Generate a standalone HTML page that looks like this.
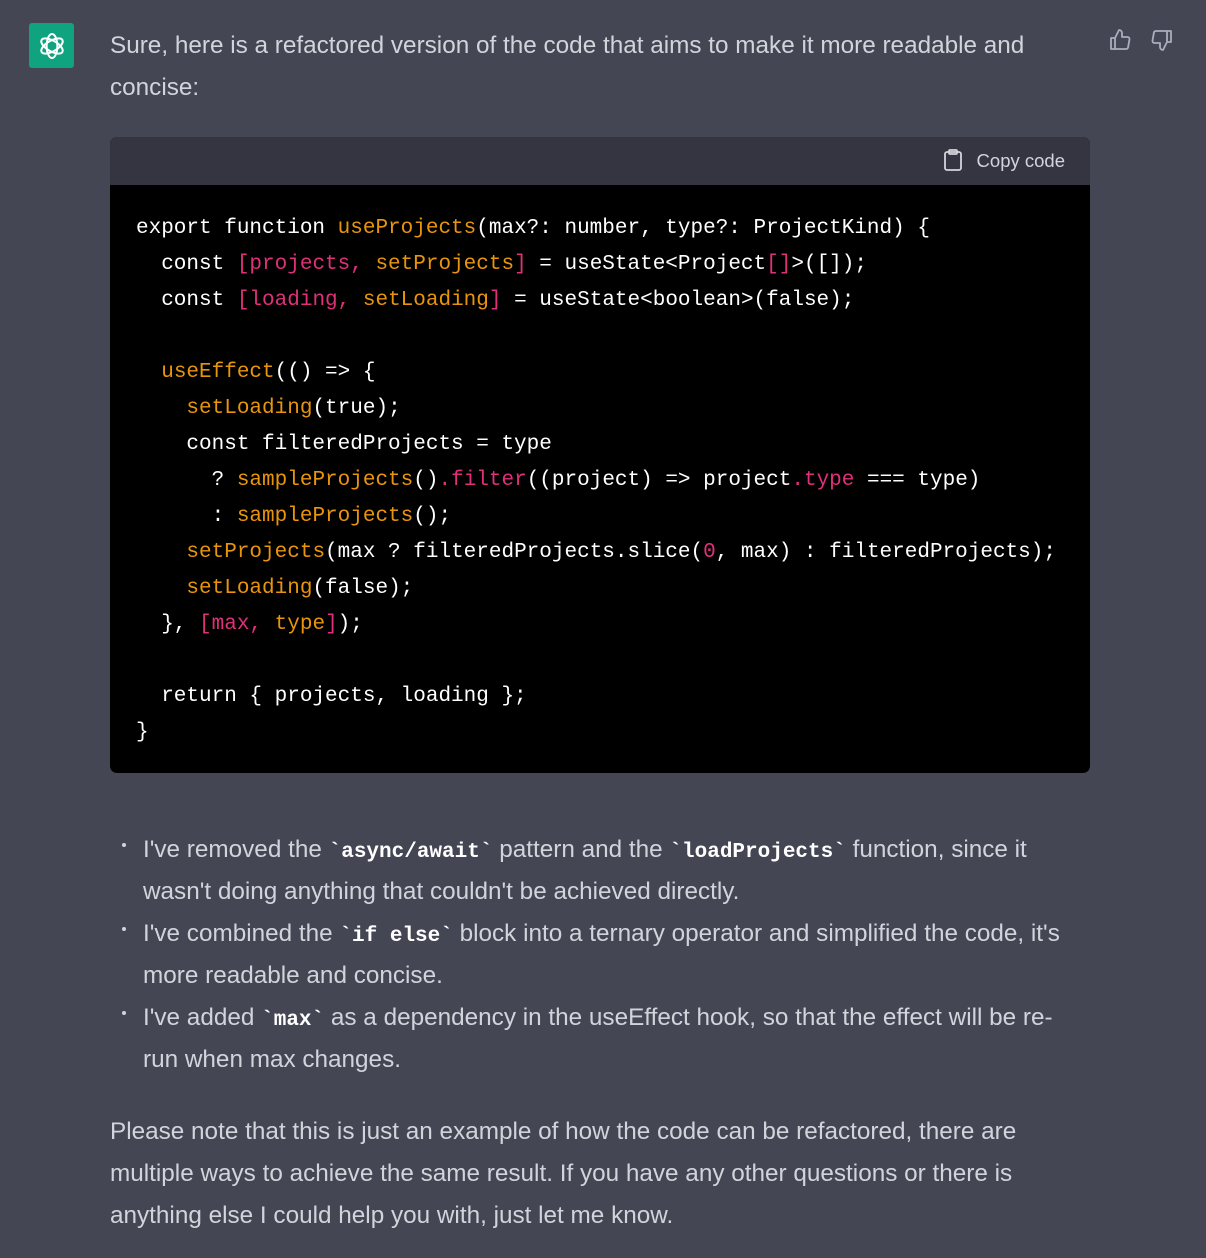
<!DOCTYPE html>
<html><head><meta charset="utf-8"><style>
html,body{margin:0;padding:0;}
body{width:1206px;height:1258px;background:#444654;font-family:"Liberation Sans",sans-serif;color:#d1d5db;position:relative;overflow:hidden;}
.logo{position:absolute;left:29px;top:23px;width:45px;height:45px;background:#10a37f;border-radius:3px;display:flex;align-items:center;justify-content:center;}
.txt{position:absolute;left:110px;width:980px;font-size:24.3px;line-height:42px;}
.code{position:absolute;left:110px;top:137px;width:980px;height:636px;background:#000;border-radius:7px;overflow:hidden;}
.hdr{height:48px;background:#343541;position:relative;}
.copy{position:absolute;right:25px;top:0;line-height:48px;font-size:18.5px;color:#d1d5db;}
pre{margin:0;padding:26px 26px;font-family:"Liberation Mono",monospace;font-size:21px;line-height:36px;color:#fff;}
.o{color:#e9950c}.p{color:#df3079}
ul{position:absolute;left:110px;top:829px;margin:0;padding:0 0 0 33px;list-style:none;width:940px;font-size:24.3px;line-height:42px;}
li{position:relative}
li:before{content:"";position:absolute;left:-21px;top:14px;width:4px;height:4px;border-radius:2px;background:#d1d5db;}
code{font-family:"Liberation Mono",monospace;font-weight:bold;color:#fff;font-size:21px;line-height:0;}
.ic{position:absolute;top:28px;}
</style></head><body>
<div class="logo"><svg width="32" height="32" viewBox="0 0 24 24" fill="none" stroke="#fff" stroke-width="1.5"><ellipse cx="12" cy="12" rx="4" ry="9"/><ellipse cx="12" cy="12" rx="4" ry="9" transform="rotate(60 12 12)"/><ellipse cx="12" cy="12" rx="4" ry="9" transform="rotate(120 12 12)"/></svg></div>
<svg class="ic" style="left:1108px" width="24" height="24" viewBox="0 0 24 24" fill="none" stroke="#acacbe" stroke-width="1.8" stroke-linejoin="round"><path d="M7 10v11H3V10zM7 10l4-8a3 3 0 0 1 3 3v4h5.5a2 2 0 0 1 2 2.3l-1.4 8A2 2 0 0 1 18 21H7"/></svg>
<svg class="ic" style="left:1150px" width="24" height="24" viewBox="0 0 24 24" fill="none" stroke="#acacbe" stroke-width="1.8" stroke-linejoin="round"><path d="M17 14V3h4v11zM17 14l-4 8a3 3 0 0 1-3-3v-4H4.5a2 2 0 0 1-2-2.3l1.4-8A2 2 0 0 1 6 3h11"/></svg>
<div class="txt" style="top:25px">Sure, here is a refactored version of the code that aims to make it more readable and concise:</div>
<div class="code"><div class="hdr"><div class="copy"><svg style="vertical-align:-4px;margin-right:14px" width="20" height="22" viewBox="0 0 20 22" fill="none" stroke="#d1d5db" stroke-width="1.8"><rect x="2" y="3" width="16" height="18" rx="2"/><rect x="6" y="1" width="8" height="4" rx="1"/></svg>Copy code</div></div>
<pre>export function <span class="o">useProjects</span>(max?: number, type?: ProjectKind) {
  const <span class="p">[projects, </span><span class="o">setProjects</span><span class="p">]</span> = useState&lt;Project<span class="p">[]</span>&gt;([]);
  const <span class="p">[loading, </span><span class="o">setLoading</span><span class="p">]</span> = useState&lt;boolean&gt;(false);

  <span class="o">useEffect</span>(() =&gt; {
    <span class="o">setLoading</span>(true);
    const filteredProjects = type
      ? <span class="o">sampleProjects</span>()<span class="p">.filter</span>((project) =&gt; project<span class="p">.type</span> === type)
      : <span class="o">sampleProjects</span>();
    <span class="o">setProjects</span>(max ? filteredProjects.slice(<span class="p">0</span>, max) : filteredProjects);
    <span class="o">setLoading</span>(false);
  }, <span class="p">[max, </span><span class="o">type</span><span class="p">]</span>);

  return { projects, loading };
}</pre></div>
<ul>
<li>I've removed the <code>`async/await`</code> pattern and the <code>`loadProjects`</code> function, since it wasn't doing anything that couldn't be achieved directly.</li>
<li>I've combined the <code>`if else`</code> block into a ternary operator and simplified the code, it's more readable and concise.</li>
<li>I've added <code>`max`</code> as a dependency in the useEffect hook, so that the effect will be re-run when max changes.</li>
</ul>
<div class="txt" style="top:1111px;width:930px">Please note that this is just an example of how the code can be refactored, there are multiple ways to achieve the same result. If you have any other questions or there is anything else I could help you with, just let me know.</div>
</body></html>
